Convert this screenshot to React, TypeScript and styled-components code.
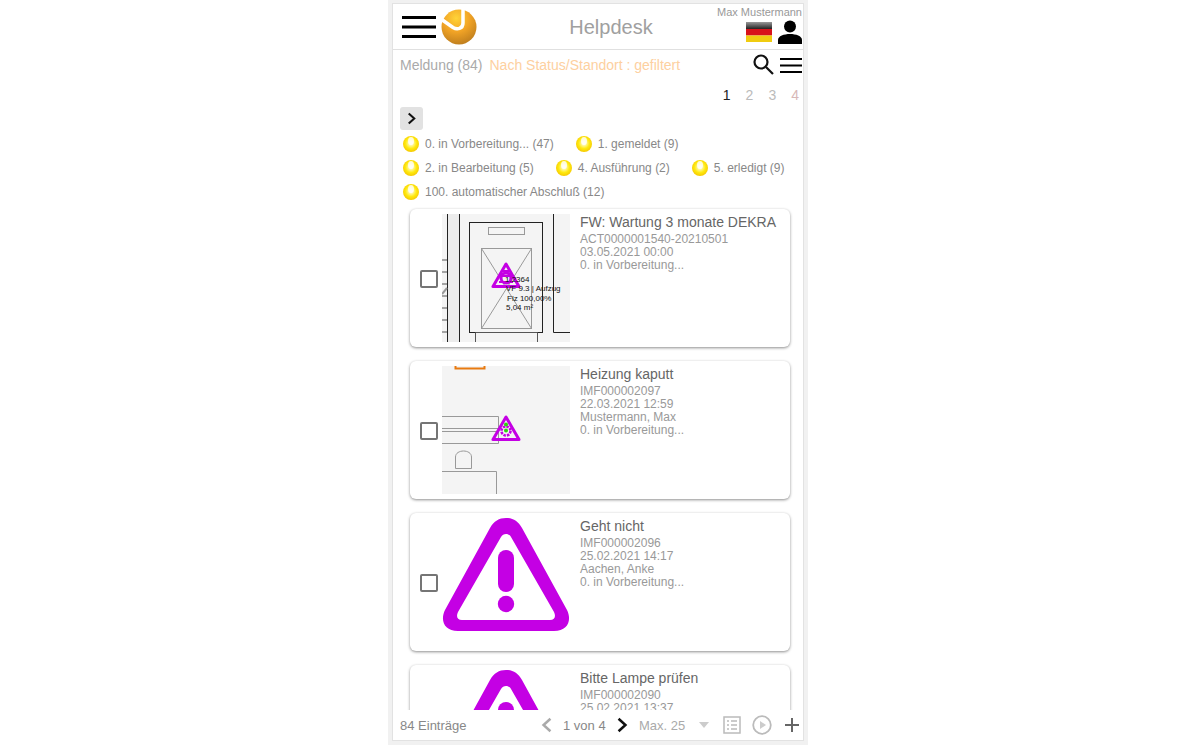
import { ReactNode } from "react";
import styled, { createGlobalStyle } from "styled-components";

const GlobalStyle = createGlobalStyle`
  html, body {
    margin: 0;
    padding: 0;
    background: #fff;
    font-family: "Liberation Sans", Arial, sans-serif;
    overflow: hidden;
  }
  #root {
    width: 1196px;
  }
`;

const Page = styled.div`
  width: 420px;
  height: 745px;
  margin: 0 auto;
  padding: 3px 4px 4px;
  box-sizing: border-box;
  background: #f1f1f1;
`;

const Phone = styled.div`
  height: 100%;
  background: #fff;
  border: 1px solid #e2e2e2;
  box-sizing: border-box;
  display: flex;
  flex-direction: column;
  overflow: hidden;
`;

const Header = styled.header`
  height: 46px;
  flex: none;
  box-sizing: border-box;
  border-bottom: 1px solid #e0e0e0;
  display: grid;
  grid-template-columns: 130px 1fr 130px;
  align-items: center;
`;

const HeaderLeft = styled.div`
  display: flex;
  align-items: center;
  gap: 5px;
  padding-left: 9px;
`;

const Title = styled.div`
  text-align: center;
  font-size: 20px;
  color: #a0a0a0;
  margin-top: 1px;
  padding-left: 26px;
`;

const HeaderRight = styled.div`
  display: flex;
  flex-direction: column;
  align-items: flex-end;
  padding-right: 1px;
  height: 100%;
  box-sizing: border-box;
  padding-top: 2px;
`;

const UserName = styled.div`
  font-size: 11px;
  line-height: 13px;
  color: #999;
  white-space: nowrap;
`;

const UserIcons = styled.div`
  display: flex;
  align-items: center;
  gap: 6px;
  margin-top: 1px;
`;

const SubBar = styled.div`
  flex: none;
  height: 30px;
  display: flex;
  align-items: center;
  padding: 0 1px 0 7px;
  font-size: 14px;
`;

const Count = styled.span`
  color: #aaa;
`;

const Filter = styled.span`
  color: #fdd0a0;
  margin-left: 7px;
  flex: 1;
`;

const SubIcons = styled.div`
  display: flex;
  align-items: center;
  gap: 5px;
`;

const Pages = styled.div`
  flex: none;
  height: 24px;
  box-sizing: border-box;
  padding: 6px 4px 0 0;
  display: flex;
  justify-content: flex-end;
  align-items: center;
  gap: 15px;
  font-size: 14px;
`;

const PageNo = styled.span<{ $color: string }>`
  color: ${(p) => p.$color};
`;

const Toggle = styled.button`
  flex: none;
  width: 23px;
  height: 23px;
  margin: 3px 0 0 7px;
  padding: 0;
  border: none;
  border-radius: 3px;
  background: #e2e2e2;
  display: flex;
  align-items: center;
  justify-content: center;
`;

const Legend = styled.div`
  flex: none;
  display: flex;
  flex-wrap: wrap;
  gap: 0 22px;
  padding: 2px 0 0 10px;
`;

const LegendItem = styled.div`
  display: flex;
  align-items: center;
  gap: 6px;
  height: 24px;
  font-size: 12px;
  color: #888;
`;

const Bulb = styled.span`
  width: 16px;
  height: 16px;
  border-radius: 50%;
  background: radial-gradient(circle at 50% 45%, #fffbc8 0 12%, #ffea10 45%, #f5c800 75%, #d8a010 100%);
  position: relative;
  overflow: hidden;

  &::before {
    content: "";
    position: absolute;
    left: 5px;
    top: 1px;
    width: 6px;
    height: 8px;
    border-radius: 50%;
    background: rgba(255, 255, 255, 0.8);
  }
`;

const List = styled.div`
  flex: 1;
  min-height: 0;
  overflow: hidden;
  padding: 5px 13px 0 17px;
  display: flex;
  flex-direction: column;
  gap: 14px;
`;

const Card = styled.article`
  flex: none;
  height: 138px;
  box-sizing: border-box;
  border-radius: 6px;
  background: #fff;
  box-shadow: 0 1px 3px rgba(0, 0, 0, 0.45);
  display: flex;
  align-items: center;
  padding-left: 10px;
`;

const Check = styled.span`
  flex: none;
  width: 14px;
  height: 14px;
  border: 2px solid #757575;
  border-radius: 2px;
  margin: 2px 4px 0 0;
`;

const Thumb = styled.div`
  flex: none;
  width: 128px;
  height: 128px;
  overflow: hidden;
`;

const Info = styled.div`
  align-self: flex-start;
  padding: 5px 0 0 10px;
  font-size: 12px;
  line-height: 13px;
  color: #999;
`;

const CardTitle = styled.div`
  font-size: 14px;
  line-height: 17px;
  margin-bottom: 2px;
  color: #666;
`;

const Footer = styled.footer`
  flex: none;
  height: 30px;
  background: #fff;
  display: flex;
  align-items: center;
  padding: 0 3px 0 7px;
  font-size: 13px;
  color: #888;
`;

const Entries = styled.span`
  width: 139px;
`;

const Pager = styled.div`
  display: flex;
  align-items: center;
  gap: 8px;
  width: 100px;
`;

const Max = styled.span`
  color: #aaa;
  width: 60px;
`;

const Caret = styled.svg`
  margin-right: 14px;
`;

const FooterIcons = styled.div`
  display: flex;
  align-items: center;
  gap: 11px;
`;

const Burger = ({ width, height, bar }: { width: number; height: number; bar: number }) => (
  <svg width={width} height={height} viewBox={`0 0 ${width} ${height}`}>
    <rect y="0" width={width} height={bar} fill="#000" />
    <rect y={(height - bar) / 2} width={width} height={bar} fill="#000" />
    <rect y={height - bar} width={width} height={bar} fill="#000" />
  </svg>
);

const Logo = () => (
  <svg width="36" height="36" viewBox="0 0 36 36">
    <defs>
      <radialGradient id="logoBall" cx="0.42" cy="0.25" r="0.85">
        <stop offset="0" stopColor="#ffd438" />
        <stop offset="0.45" stopColor="#f2a426" />
        <stop offset="1" stopColor="#b4761c" />
      </radialGradient>
    </defs>
    <circle cx="18" cy="18" r="17.5" fill="url(#logoBall)" />
    <path
      d="M0 10L12 18.5C16 21 22 20 22 14V0"
      fill="none"
      stroke="#fff"
      strokeWidth="3.5"
    />
  </svg>
);

const Flag = () => (
  <svg width="26" height="20" viewBox="0 0 26 20">
    <defs>
      <linearGradient id="flagBlack" x1="0" y1="0" x2="0" y2="1">
        <stop offset="0" stopColor="#999" />
        <stop offset="1" stopColor="#222" />
      </linearGradient>
    </defs>
    <rect width="26" height="7" fill="url(#flagBlack)" />
    <rect y="7" width="26" height="6.5" fill="#d8121a" />
    <rect y="13.5" width="26" height="6.5" fill="#f0cc10" />
  </svg>
);

const Person = () => (
  <svg width="24" height="24" viewBox="0 0 24 24">
    <circle cx="12" cy="6.5" r="6" fill="#000" />
    <path d="M0 24V20C0 16 6 14 12 14S24 16 24 20V24Z" fill="#000" />
  </svg>
);

const Search = () => (
  <svg width="22" height="22" viewBox="0 0 22 22" fill="none" stroke="#111" strokeWidth="2.2">
    <circle cx="8" cy="8" r="6.5" />
    <path d="M13 13L20 20" />
  </svg>
);

const Chevron = ({ dir, color, size = 14 }: { dir: "left" | "right"; color: string; size?: number }) => (
  <svg width={size} height={size} viewBox="0 0 14 14" fill="none" stroke={color} strokeWidth="2.2">
    <path d={dir === "right" ? "M4 1.5L10 7L4 12.5" : "M10 1.5L4 7L10 12.5"} />
  </svg>
);

const WARN = "#c400e4";

const Warning = () => (
  <svg width="128" height="128" viewBox="0 0 128 128">
    <path
      fillRule="evenodd"
      fill={WARN}
      d="M64 0C71 0 76 3 80 10L125 92C130 102 126 113 112 113H16C2 113 -2 102 3 92L48 10C52 3 57 0 64 0Z
         M64 16C62 16 60 17 59 19L16 94C14 98 15 102 20 102H108C113 102 114 98 112 94L69 19C68 17 66 16 64 16Z"
    />
    <rect x="56" y="32" width="16" height="42" rx="8" fill={WARN} />
    <circle cx="64" cy="86" r="8.2" fill={WARN} />
  </svg>
);

const SmallWarning = ({ x, y, children }: { x: number; y: number; children?: ReactNode }) => (
  <g transform={`translate(${x} ${y})`}>
    <path d="M15 2L2 24.5H28Z" fill="none" stroke={WARN} strokeWidth="3" strokeLinejoin="round" />
    {children}
  </g>
);

const PlanOne = () => (
  <svg width="128" height="128" viewBox="0 0 128 128">
    <rect width="128" height="128" fill="#f4f4f4" />
    <rect x="5" y="0" width="12" height="128" fill="#ececec" />
    <g stroke="#222" fill="none">
      <path d="M5.5 0V128M17.5 0V128" />
      <rect x="27.5" y="8.5" width="73" height="110" />
      <path d="M111.5 0V118.5H128" />
      <path d="M33.5 128V118.5H95.5V128" stroke="#555" />
    </g>
    <g stroke="#999" fill="none">
      <rect x="46.5" y="13.5" width="36" height="7" />
      <rect x="39.5" y="34.5" width="50" height="80" />
      <path d="M39.5 34.5L89.5 114.5M89.5 34.5L39.5 114.5" />
      <path d="M0 46H5M0 58H5M0 70H5M0 82H5M0 94H5M0 106H5M0 118H5" stroke="#555" />
      <path d="M0 80L5 74" strokeWidth="2" />
    </g>
    <SmallWarning x={49} y={48}>
      <circle cx="15" cy="16" r="5" fill="none" stroke={WARN} strokeWidth="3" />
      <path d="M8 20H22M12 9H18M10 14H20" stroke={WARN} strokeWidth="2" />
    </SmallWarning>
    <g fontFamily="'Liberation Sans', sans-serif" fontSize="8" fill="#111">
      <text x="63" y="68">1.2364</text>
      <text x="64" y="77">VF 9.3 | Aufzug</text>
      <text x="65" y="87">Flz 100,00%</text>
      <text x="64" y="96">5,04 m²</text>
    </g>
  </svg>
);

const PlanTwo = () => (
  <svg width="128" height="128" viewBox="0 0 128 128">
    <rect width="128" height="128" fill="#f4f4f4" />
    <path d="M13.5 0V2.5H42.5V0" fill="none" stroke="#e87a10" strokeWidth="2" />
    <g stroke="#999" fill="none">
      <path d="M0 50.5H56.5V77.5H0M0 62.5H56.5M0 65.5H56.5" />
      <path d="M13.5 102.5V91C13.5 83 29.5 83 29.5 91V102.5Z" />
      <path d="M0 105.5H54.5V128" />
    </g>
    <SmallWarning x={49} y={49}>
      <circle cx="15" cy="16" r="4.5" fill="none" stroke={WARN} strokeWidth="2.6" strokeDasharray="2.5 1" />
      <circle cx="15" cy="9.5" r="2" fill="#2fd010" />
      <circle cx="15" cy="15.5" r="2" fill="#2fd010" />
    </SmallWarning>
  </svg>
);

const legend = [
  "0. in Vorbereitung... (47)",
  "1. gemeldet (9)",
  "2. in Bearbeitung (5)",
  "4. Ausführung (2)",
  "5. erledigt (9)",
  "100. automatischer Abschluß (12)",
];

const cards = [
  { title: "FW: Wartung 3 monate DEKRA", lines: ["ACT0000001540-20210501", "03.05.2021 00:00", "0. in Vorbereitung..."], thumb: <PlanOne /> },
  { title: "Heizung kaputt", lines: ["IMF000002097", "22.03.2021 12:59", "Mustermann, Max", "0. in Vorbereitung..."], thumb: <PlanTwo /> },
  { title: "Geht nicht", lines: ["IMF000002096", "25.02.2021 14:17", "Aachen, Anke", "0. in Vorbereitung..."], thumb: <Warning /> },
  { title: "Bitte Lampe prüfen", lines: ["IMF000002090", "25.02.2021 13:37", "Mustermann, Max", "0. in Vorbereitung..."], thumb: <Warning /> },
];

export default function App() {
  return (
    <>
      <GlobalStyle />
      <Page>
        <Phone>
          <Header>
            <HeaderLeft>
              <Burger width={34} height={22} bar={3} />
              <Logo />
            </HeaderLeft>
            <Title>Helpdesk</Title>
            <HeaderRight>
              <UserName>Max Mustermann</UserName>
              <UserIcons>
                <Flag />
                <Person />
              </UserIcons>
            </HeaderRight>
          </Header>
          <SubBar>
            <Count>Meldung (84)</Count>
            <Filter>Nach Status/Standort : gefiltert</Filter>
            <SubIcons>
              <Search />
              <Burger width={22} height={15} bar={2} />
            </SubIcons>
          </SubBar>
          <Pages>
            <PageNo $color="#222">1</PageNo>
            <PageNo $color="#bbb">2</PageNo>
            <PageNo $color="#bbb">3</PageNo>
            <PageNo $color="#d8b8b8">4</PageNo>
          </Pages>
          <Toggle>
            <Chevron dir="right" color="#111" size={13} />
          </Toggle>
          <Legend>
            {legend.map((item) => (
              <LegendItem key={item}>
                <Bulb />
                {item}
              </LegendItem>
            ))}
          </Legend>
          <List>
            {cards.map((card) => (
              <Card key={card.title}>
                <Check />
                <Thumb>{card.thumb}</Thumb>
                <Info>
                  <CardTitle>{card.title}</CardTitle>
                  {card.lines.map((line) => (
                    <div key={line}>{line}</div>
                  ))}
                </Info>
              </Card>
            ))}
          </List>
          <Footer>
            <Entries>84 Einträge</Entries>
            <Pager>
              <Chevron dir="left" color="#aaa" size={16} />
              <span>1 von 4</span>
              <Chevron dir="right" color="#111" size={16} />
            </Pager>
            <Max>Max. 25</Max>
            <Caret width="10" height="6" viewBox="0 0 10 6">
              <path d="M0 0H10L5 6Z" fill="#ccc" />
            </Caret>
            <FooterIcons>
              <svg width="18" height="18" viewBox="0 0 18 18" fill="none" stroke="#bbb" strokeWidth="1.5">
                <rect x="1" y="1" width="16" height="16" />
                <path d="M4 5H6M8 5H14M4 9H6M8 9H14M4 13H6M8 13H14" />
              </svg>
              <svg width="20" height="20" viewBox="0 0 20 20" fill="none">
                <circle cx="10" cy="10" r="8.8" stroke="#bbb" strokeWidth="1.8" />
                <path d="M8 6L14 10L8 14Z" fill="#ccc" />
              </svg>
              <svg width="16" height="16" viewBox="0 0 16 16" stroke="#666" strokeWidth="2" style={{ marginLeft: 1 }}>
                <path d="M8 1V15M1 8H15" />
              </svg>
            </FooterIcons>
          </Footer>
        </Phone>
      </Page>
    </>
  );
}
